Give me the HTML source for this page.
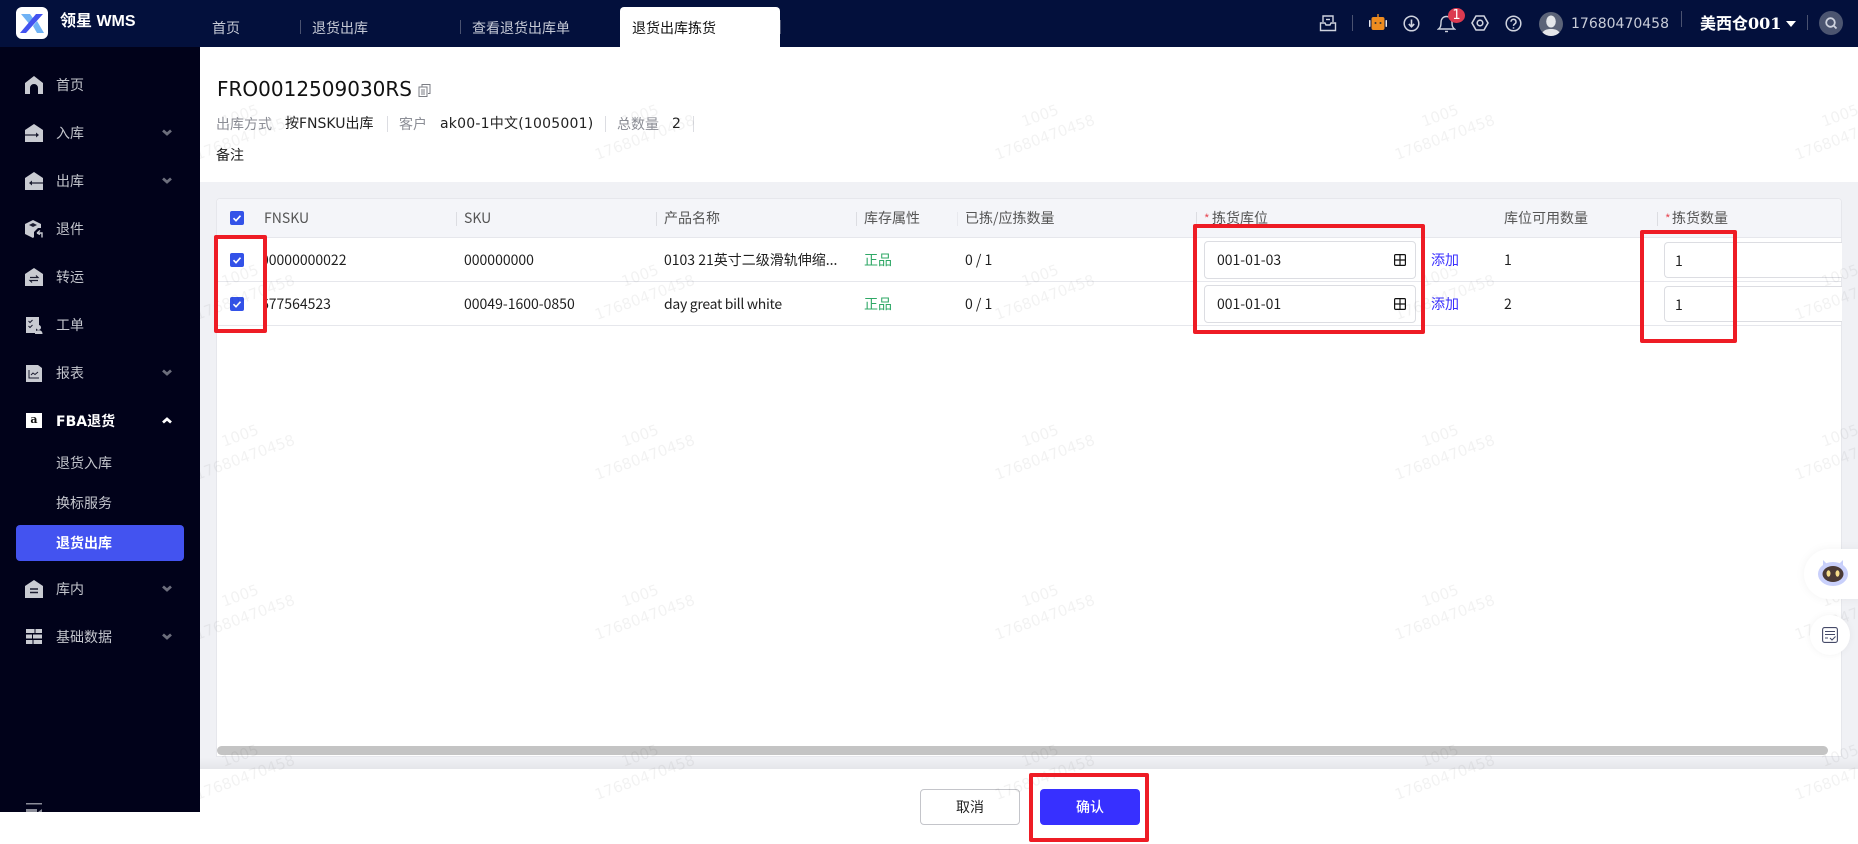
<!DOCTYPE html>
<html lang="zh"><head><meta charset="utf-8"><title>退货出库拣货</title>
<style>
*{box-sizing:border-box;margin:0;padding:0}
html,body{width:1858px;height:844px;overflow:hidden;background:#fff}
body{position:relative;font-family:"Noto Sans CJK SC","Liberation Sans",sans-serif;font-size:14px;color:#222}
.a{position:absolute}
.t{position:absolute;white-space:nowrap;line-height:20px;height:20px}
.dj{font-family:"DejaVu Sans","Noto Sans CJK SC",sans-serif}
.hd{background:#03103c;left:0;top:0;width:1858px;height:47px}
.side{background:#01021a;left:0;top:47px;width:200px;height:765px;overflow:hidden}
.tab{color:#c6cad6}
.v{position:absolute;width:1px}
.m{color:#c3c5cc;left:56px}
.ic{position:absolute;left:25px;width:18px;height:18px}
.ch{position:absolute;left:162px;width:10px;height:7px}
.th{color:#555;font-size:14px}
.td{color:#1f1f1f;font-size:14px}
.line{position:absolute;left:217px;width:1624px;height:1px;background:#e6e7ec}
.inp{position:absolute;background:#fff;border:1px solid #dcdde2;border-radius:4px}
.cb{position:absolute;left:230px;width:14px;height:14px}
.red{position:absolute;border:4px solid #ee1c25;border-radius:2px;z-index:6}
.star{color:#e8505b;font-size:12px}
</style></head><body>

<div class="a hd"></div>
<svg class="a" style="left:16px;top:7px" width="32" height="32" viewBox="0 0 32 32"><rect width="32" height="32" rx="6" fill="#fff"/><path d="M5 7h9l5 7-4 5z" fill="#6fb2f5"/><path d="M20 7h7L10 26H4z" fill="#4353f0"/><path d="M17 19l4-5 7 12h-7z" fill="#6fb2f5"/></svg>
<div class="t" style="left:60px;top:12px;color:#fff;font:bold 16px/20px 'Liberation Sans','Noto Sans CJK SC',sans-serif">领星 WMS</div>

<div class="t tab" style="left:212px;top:18px">首页</div>
<div class="v" style="left:300px;top:20px;height:14px;background:#4a5270"></div>
<div class="t tab" style="left:312px;top:18px">退货出库</div>
<div class="v" style="left:460px;top:20px;height:14px;background:#4a5270"></div>
<div class="t tab" style="left:472px;top:18px">查看退货出库单</div>
<div class="a" style="left:620px;top:7px;width:160px;height:40px;background:#fff;border-radius:4px 4px 0 0"></div>
<div class="t" style="left:632px;top:18px;color:#111">退货出库拣货</div>
<div class="v" style="left:780px;top:20px;height:14px;background:#4a5270"></div>

<svg class="a" style="left:1319px;top:14px" width="18" height="18" viewBox="0 0 18 18" fill="none" stroke="#cfd3de" stroke-width="1.4"><path d="M4 8V2h10v6M1.500 9v7.500h15V9H12l-1 2H7L6 9z"/><path d="M7 5.500h4"/></svg>
<div class="v" style="left:1352px;top:15px;height:16px;background:#4a5270"></div>
<svg class="a" style="left:1368px;top:13px" width="20" height="20" viewBox="0 0 20 20"><rect x="9.300" y="1" width="1.400" height="4" fill="#ee8c20"/><rect x="3.500" y="4" width="13" height="13" rx="2" fill="#ee8c20"/><rect x="1" y="7" width="1.500" height="7" rx=".7" fill="#e8e8ee"/><rect x="17.500" y="7" width="1.500" height="7" rx=".7" fill="#e8e8ee"/><circle cx="7.500" cy="10" r="1" fill="#333"/><circle cx="12.500" cy="10" r="1" fill="#333"/></svg>
<svg class="a" style="left:1403px;top:15px" width="17" height="17" viewBox="0 0 17 17" fill="none" stroke="#cfd3de"><circle cx="8.500" cy="8.500" r="7.300" stroke-width="1.500"/><path d="M8.500 4.500v7M5.800 9l2.700 2.700L11.200 9" stroke-width="1.600"/></svg>
<svg class="a" style="left:1437px;top:13px" width="19" height="20" viewBox="0 0 19 20" fill="none" stroke="#cfd3de" stroke-width="1.400"><path d="M1.500 16c2-1.500 2.500-3 2.500-6.500C4 6 6 3.500 9.500 3.500S15 6 15 9.500c0 3.500.5 5 2.500 6.500z"/><path d="M8 18.500h3"/></svg>
<div class="a" style="left:1448px;top:8px;width:17px;height:15px;border-radius:50%;background:#dc3a50;color:#fff;font:13px/15px 'DejaVu Sans',sans-serif;text-align:center">1</div>
<svg class="a" style="left:1471px;top:14px" width="18" height="18" viewBox="0 0 18 18" fill="none" stroke="#cfd3de" stroke-width="1.600"><path d="M5 2h8l4 7-4 7H5L1 9z"/><circle cx="9" cy="9" r="2.800"/></svg>
<svg class="a" style="left:1505px;top:15px" width="17" height="17" viewBox="0 0 17 17" fill="none" stroke="#cfd3de" stroke-width="1.500"><circle cx="8.500" cy="8.500" r="7.300"/><path d="M6 6.800a2.500 2.500 0 1 1 3.800 2.100c-.9.600-1.300 1-1.300 2"/><path d="M8.500 12.300v1.300"/></svg>
<svg class="a" style="left:1539px;top:12px" width="24" height="24" viewBox="0 0 24 24"><circle cx="12" cy="12" r="12" fill="#5b6378"/><ellipse cx="12" cy="9.500" rx="4.800" ry="6" fill="#e4e6ea"/><path d="M3.500 20.500c2-3 5-3.500 8.500-3.500s6.500.5 8.500 3.500A12 12 0 0 1 12 24a12 12 0 0 1-8.500-3.500z" fill="#e4e6ea"/></svg>
<div class="t dj" style="left:1571px;top:14px;color:#c8ccd8">17680470458</div>
<div class="v" style="left:1681px;top:11px;height:16px;background:#4a5270"></div>
<div class="t" style="left:1700px;top:14px;color:#fff;font:bold 16px/20px 'DejaVu Serif','Noto Sans CJK SC',serif">美西仓001</div>
<svg class="a" style="left:1786px;top:21px" width="10" height="6" viewBox="0 0 10 6"><path d="M0 0h10L5 6z" fill="#fff"/></svg>
<div class="v" style="left:1807px;top:15px;height:15px;background:#4a5270"></div>
<svg class="a" style="left:1819px;top:11px" width="24" height="24" viewBox="0 0 24 24" fill="none"><circle cx="12" cy="12" r="12" fill="#4c5570"/><circle cx="11.500" cy="11.500" r="4.300" stroke="#cfd3de" stroke-width="1.800"/><path d="M14.500 14.500l3 3" stroke="#cfd3de" stroke-width="1.800"/></svg>

<div class="a side"></div>
<svg class="ic" style="top:76px" viewBox="0 0 18 18"><path d="M0 18V7L9 0l9 7v11h-5v-6a4 4 0 0 0-8 0v6z" fill="#c9cbd2"/></svg>
<div class="t m" style="top:75px">首页</div>
<svg class="ic" style="top:124px" viewBox="0 0 18 18"><path d="M0 18V6l9-6 9 6v12z" fill="#c9cbd2"/><path d="M0 11h12" stroke="#3a3b4d" stroke-width="1.500"/><path d="M11 8.500l3 2.500-3 2.500z" fill="#1b1c30"/></svg>
<div class="t m" style="top:123px">入库</div>
<svg class="ch" style="top:129px" viewBox="0 0 10 7"><path d="M1 1.500L5 5l4-3.500" fill="none" stroke="#6c6e7c" stroke-width="2.800"/></svg>
<svg class="ic" style="top:172px" viewBox="0 0 18 18"><path d="M0 18V6l9-6 9 6v12z" fill="#c9cbd2"/><path d="M6 11h12" stroke="#3a3b4d" stroke-width="1.500"/><path d="M7 8.500L4 11l3 2.500z" fill="#1b1c30"/></svg>
<div class="t m" style="top:171px">出库</div>
<svg class="ch" style="top:177px" viewBox="0 0 10 7"><path d="M1 1.500L5 5l4-3.500" fill="none" stroke="#6c6e7c" stroke-width="2.800"/></svg>
<svg class="ic" style="top:220px" viewBox="0 0 18 18"><path d="M8 0l8 4v4l-3 0-4 4v5l-1 1-8-4V4z" fill="#c9cbd2"/><path d="M8 3l4 2-4 2-4-2z" fill="#1b1c30"/><path d="M12 13l3-2.500M12 13l3 1.500M12.500 13H17v4.500" fill="none" stroke="#c9cbd2" stroke-width="1.400"/></svg>
<div class="t m" style="top:219px">退件</div>
<svg class="ic" style="top:268px" viewBox="0 0 18 18"><path d="M0 18V6l9-6 9 6v12z" fill="#c9cbd2"/><path d="M5 9.500h8l-2-2M13 12.500H5l2 2" fill="none" stroke="#1b1c30" stroke-width="1.200"/></svg>
<div class="t m" style="top:267px">转运</div>
<svg class="ic" style="top:316px" viewBox="0 0 18 18"><path d="M1 1h13v9a4 4 0 0 0-3 4l0 3H1z" fill="#c9cbd2"/><path d="M3.500 5l1.500 1.500L7.500 4M3.500 10l1.500 1.500L7.500 9" fill="none" stroke="#1b1c30" stroke-width="1"/><circle cx="13.500" cy="11.500" r="2.500" fill="#c9cbd2"/><path d="M10 18c0-3 1.500-3.800 3.500-3.800S17.500 15 17.500 18z" fill="#c9cbd2"/></svg>
<div class="t m" style="top:315px">工单</div>
<svg class="ic" style="top:364px" viewBox="0 0 18 18"><path d="M1 1h12l4 3v14H1z" fill="#c9cbd2"/><path d="M4 6v8h10M6 11l2-2 2 1.500 3-2.500" fill="none" stroke="#1b1c30" stroke-width="1"/></svg>
<div class="t m" style="top:363px">报表</div>
<svg class="ch" style="top:369px" viewBox="0 0 10 7"><path d="M1 1.500L5 5l4-3.500" fill="none" stroke="#6c6e7c" stroke-width="2.800"/></svg>

<div class="a" style="left:26px;top:413px;width:16px;height:15px;background:#fff;color:#111;font:bold 11px/14px 'DejaVu Serif',serif;text-align:center">a</div>
<div class="t" style="left:56px;top:411px;color:#fff;font-weight:700"><span class="dj" style="font-weight:700">FBA</span>退货</div>
<svg class="ch" style="top:417px" viewBox="0 0 10 7"><path d="M1 5.500L5 2l4 3.500" fill="none" stroke="#fff" stroke-width="2.800"/></svg>
<div class="t m" style="top:453px">退货入库</div>
<div class="t m" style="top:493px">换标服务</div>
<div class="a" style="left:16px;top:525px;width:168px;height:36px;background:#4353f0;border-radius:4px"></div>
<div class="t" style="left:56px;top:533px;color:#fff;font-weight:700">退货出库</div>
<svg class="ic" style="top:580px" viewBox="0 0 18 18"><path d="M0 18V6l9-6 9 6v12z" fill="#c9cbd2"/><path d="M5 9h8M5 12.500h8" stroke="#1b1c30" stroke-width="1.500"/></svg>
<div class="t m" style="top:579px">库内</div>
<svg class="ch" style="top:585px" viewBox="0 0 10 7"><path d="M1 1.500L5 5l4-3.500" fill="none" stroke="#6c6e7c" stroke-width="2.800"/></svg>
<svg class="ic" style="top:629px;left:26px;width:16px;height:15px" viewBox="0 0 16 15"><path d="M0 0h16v4H0zM0 5.500h6v4H0zM7 5.500h9v4H7zM0 11h16v4H0z" fill="#c9cbd2"/><path d="M7 11v4M9 0v4" stroke="#01021a"/></svg>
<div class="t m" style="top:627px">基础数据</div>
<svg class="ch" style="top:633px" viewBox="0 0 10 7"><path d="M1 1.500L5 5l4-3.500" fill="none" stroke="#6c6e7c" stroke-width="2.800"/></svg>
<svg class="a" style="left:26px;top:803px" width="16" height="9" viewBox="0 0 16 9"><path d="M0 0h16v1.500H0zM0 6h11v3H0zM12 9l4-3v3z" fill="#8a8c98"/></svg>

<!-- page head -->
<div class="t dj" style="left:217px;top:76px;height:26px;font-size:20px;line-height:26px;color:#111">FRO0012509030RS</div>
<svg class="a" style="left:418px;top:84px" width="13" height="13" viewBox="0 0 13 13" fill="none" stroke="#7b7d84"><path d="M4 2.500V.5h8v9h-2"/><rect x="1" y="3" width="8" height="9.500"/><path d="M3 6h4M3 8h4M3 10h4"/></svg>
<div class="t" style="left:216px;top:114px;color:#8c8e96">出库方式</div>
<div class="t dj" style="left:285px;top:114px;color:#222;font-size:14px">按FNSKU出库</div>
<div class="v" style="left:387px;top:116px;height:16px;background:#dcdde2"></div>
<div class="t" style="left:399px;top:114px;color:#8c8e96">客户</div>
<div class="t dj" style="left:440px;top:114px;color:#222;font-size:14px;letter-spacing:.22px">ak00-1中文(1005001)</div>
<div class="v" style="left:605px;top:116px;height:16px;background:#dcdde2"></div>
<div class="t" style="left:617px;top:114px;color:#8c8e96">总数量</div>
<div class="t dj" style="left:672px;top:114px;color:#222">2</div>
<div class="v" style="left:693px;top:116px;height:16px;background:#dcdde2"></div>
<div class="t" style="left:216px;top:145px;color:#222">备注</div>

<!-- gray panel -->
<div class="a" style="left:200px;top:182px;width:1658px;height:587px;background:linear-gradient(#f0f1f5 0,#f0f1f5 98%,#e5e6ea 100%)"></div>
<div class="a" style="left:216px;top:198px;width:1626px;height:559px;background:#fff;border:1px solid #e6e7ec;border-radius:4px 4px 0 0"></div>
<div class="a" style="left:217px;top:199px;width:1624px;height:38px;background:#f4f5f9;border-radius:4px 4px 0 0"></div>
<div class="line" style="top:237px"></div>
<div class="line" style="top:281px"></div>
<div class="line" style="top:325px"></div>

<svg class="cb" style="top:211px" viewBox="0 0 14 14"><rect width="14" height="14" rx="2" fill="#3352e8"/><path d="M3.500 7.200l2.500 2.500 4.500-5" fill="none" stroke="#fff" stroke-width="1.600"/></svg>
<svg class="cb" style="top:253px" viewBox="0 0 14 14"><rect width="14" height="14" rx="2" fill="#3352e8"/><path d="M3.500 7.200l2.500 2.500 4.500-5" fill="none" stroke="#fff" stroke-width="1.600"/></svg>
<svg class="cb" style="top:297px" viewBox="0 0 14 14"><rect width="14" height="14" rx="2" fill="#3352e8"/><path d="M3.500 7.200l2.500 2.500 4.500-5" fill="none" stroke="#fff" stroke-width="1.600"/></svg>

<div class="t th" style="left:264px;top:208px">FNSKU</div>
<div class="v" style="left:456px;top:212px;height:14px;background:#dcdde2"></div>
<div class="t th" style="left:464px;top:208px">SKU</div>
<div class="v" style="left:656px;top:212px;height:14px;background:#dcdde2"></div>
<div class="t th" style="left:664px;top:208px">产品名称</div>
<div class="v" style="left:856px;top:212px;height:14px;background:#dcdde2"></div>
<div class="t th" style="left:864px;top:208px">库存属性</div>
<div class="v" style="left:957px;top:212px;height:14px;background:#e8e9ee"></div>
<div class="t th" style="left:965px;top:208px">已拣/应拣数量</div>
<div class="v" style="left:1196px;top:212px;height:14px;background:#dcdde2"></div>
<div class="t star" style="left:1204px;top:209px">*</div>
<div class="t th" style="left:1212px;top:208px">拣货库位</div>
<div class="t th" style="left:1504px;top:208px">库位可用数量</div>
<div class="v" style="left:1657px;top:212px;height:14px;background:#dcdde2"></div>
<div class="t star" style="left:1665px;top:209px">*</div>
<div class="t th" style="left:1672px;top:208px">拣货数量</div>

<div class="a" style="left:265px;top:250px;width:100px;height:20px;overflow:hidden"><div class="t td" style="left:-4px;top:0">00000000022</div></div>
<div class="t td" style="left:464px;top:250px">000000000</div>
<div class="t td" style="left:664px;top:250px">0103 21英寸二级滑轨伸缩...</div>
<div class="t td" style="left:864px;top:250px;color:#2fa866">正品</div>
<div class="t td" style="left:965px;top:250px">0 / 1</div>

<div class="a" style="left:265px;top:294px;width:100px;height:20px;overflow:hidden"><div class="t td" style="left:-4px;top:0">677564523</div></div>
<div class="t td" style="left:464px;top:294px">00049-1600-0850</div>
<div class="t td" style="left:664px;top:294px;letter-spacing:-.3px">day great bill white</div>
<div class="t td" style="left:864px;top:294px;color:#2fa866">正品</div>
<div class="t td" style="left:965px;top:294px">0 / 1</div>

<div class="inp" style="left:1204px;top:241px;width:212px;height:38px"></div>
<div class="t td" style="left:1217px;top:250px">001-01-03</div>
<svg class="a" style="left:1394px;top:254px" width="12" height="12" viewBox="0 0 12 12" fill="none" stroke="#111" stroke-width="1.200"><rect x=".6" y=".6" width="10.800" height="10.800" rx="1"/><path d="M6 1v10M1 6h10"/></svg>
<div class="t" style="left:1431px;top:250px;color:#3a2fff">添加</div>
<div class="t td" style="left:1504px;top:250px">1</div>
<div class="inp" style="left:1664px;top:242px;width:178px;height:36px;border-right:0;border-radius:4px 0 0 4px"></div>
<div class="t td" style="left:1675px;top:251px">1</div>

<div class="inp" style="left:1204px;top:285px;width:212px;height:38px"></div>
<div class="t td" style="left:1217px;top:294px">001-01-01</div>
<svg class="a" style="left:1394px;top:298px" width="12" height="12" viewBox="0 0 12 12" fill="none" stroke="#111" stroke-width="1.200"><rect x=".6" y=".6" width="10.800" height="10.800" rx="1"/><path d="M6 1v10M1 6h10"/></svg>
<div class="t" style="left:1431px;top:294px;color:#3a2fff">添加</div>
<div class="t td" style="left:1504px;top:294px">2</div>
<div class="inp" style="left:1664px;top:286px;width:178px;height:36px;border-right:0;border-radius:4px 0 0 4px"></div>
<div class="t td" style="left:1675px;top:295px">1</div>

<div class="a" style="left:217px;top:746px;width:1611px;height:9px;background:#c4c4c4;border-radius:5px"></div>

<!-- footer buttons -->
<div class="a" style="left:920px;top:789px;width:100px;height:36px;border:1px solid #c4c5ca;border-radius:4px;text-align:center;line-height:34px;color:#222">取消</div>
<div class="a" style="left:1040px;top:789px;width:100px;height:36px;background:#3730ff;border-radius:4px;text-align:center;line-height:36px;color:#fff;font-weight:500">确认</div>

<!-- watermark -->
<svg class="a" style="left:200px;top:47px;z-index:4;pointer-events:none" width="1658" height="797" viewBox="200 47 1658 797" font-family="'DejaVu Sans',sans-serif" font-size="15" fill="#000" fill-opacity=".05" text-anchor="middle">
<g transform="translate(241,127) rotate(-20)"><text x="3" y="-6">1005</text><text y="16">17680470458</text></g>
<g transform="translate(641,127) rotate(-20)"><text x="3" y="-6">1005</text><text y="16">17680470458</text></g>
<g transform="translate(1041,127) rotate(-20)"><text x="3" y="-6">1005</text><text y="16">17680470458</text></g>
<g transform="translate(1441,127) rotate(-20)"><text x="3" y="-6">1005</text><text y="16">17680470458</text></g>
<g transform="translate(1841,127) rotate(-20)"><text x="3" y="-6">1005</text><text y="16">17680470458</text></g>
<g transform="translate(241,287) rotate(-20)"><text x="3" y="-6">1005</text><text y="16">17680470458</text></g>
<g transform="translate(641,287) rotate(-20)"><text x="3" y="-6">1005</text><text y="16">17680470458</text></g>
<g transform="translate(1041,287) rotate(-20)"><text x="3" y="-6">1005</text><text y="16">17680470458</text></g>
<g transform="translate(1441,287) rotate(-20)"><text x="3" y="-6">1005</text><text y="16">17680470458</text></g>
<g transform="translate(1841,287) rotate(-20)"><text x="3" y="-6">1005</text><text y="16">17680470458</text></g>
<g transform="translate(241,447) rotate(-20)"><text x="3" y="-6">1005</text><text y="16">17680470458</text></g>
<g transform="translate(641,447) rotate(-20)"><text x="3" y="-6">1005</text><text y="16">17680470458</text></g>
<g transform="translate(1041,447) rotate(-20)"><text x="3" y="-6">1005</text><text y="16">17680470458</text></g>
<g transform="translate(1441,447) rotate(-20)"><text x="3" y="-6">1005</text><text y="16">17680470458</text></g>
<g transform="translate(1841,447) rotate(-20)"><text x="3" y="-6">1005</text><text y="16">17680470458</text></g>
<g transform="translate(241,607) rotate(-20)"><text x="3" y="-6">1005</text><text y="16">17680470458</text></g>
<g transform="translate(641,607) rotate(-20)"><text x="3" y="-6">1005</text><text y="16">17680470458</text></g>
<g transform="translate(1041,607) rotate(-20)"><text x="3" y="-6">1005</text><text y="16">17680470458</text></g>
<g transform="translate(1441,607) rotate(-20)"><text x="3" y="-6">1005</text><text y="16">17680470458</text></g>
<g transform="translate(1841,607) rotate(-20)"><text x="3" y="-6">1005</text><text y="16">17680470458</text></g>
<g transform="translate(241,767) rotate(-20)"><text x="3" y="-6">1005</text><text y="16">17680470458</text></g>
<g transform="translate(641,767) rotate(-20)"><text x="3" y="-6">1005</text><text y="16">17680470458</text></g>
<g transform="translate(1041,767) rotate(-20)"><text x="3" y="-6">1005</text><text y="16">17680470458</text></g>
<g transform="translate(1441,767) rotate(-20)"><text x="3" y="-6">1005</text><text y="16">17680470458</text></g>
<g transform="translate(1841,767) rotate(-20)"><text x="3" y="-6">1005</text><text y="16">17680470458</text></g>
</svg>

<!-- floating widgets -->
<div class="a" style="left:1804px;top:549px;width:60px;height:50px;background:#fff;border-radius:25px 0 0 25px;box-shadow:0 0 10px rgba(0,0,0,.05);z-index:5"></div>
<svg class="a" style="left:1817px;top:558px;z-index:5" width="32" height="30" viewBox="0 0 32 30"><path d="M6 2l4 4h12l4-4v8H6z" fill="#c6cefa"/><ellipse cx="16" cy="16" rx="15" ry="12" fill="#c9d0fb"/><ellipse cx="16" cy="16" rx="10.500" ry="8" fill="#4a3a36"/><ellipse cx="11.500" cy="15.500" rx="2" ry="3.200" fill="#f5dc8a"/><ellipse cx="20.500" cy="15.500" rx="2" ry="3.200" fill="#f5dc8a"/></svg>
<div class="a" style="left:1810px;top:615px;width:40px;height:40px;background:#fff;border-radius:50%;box-shadow:0 0 8px rgba(0,0,0,.05);z-index:5"></div>
<svg class="a" style="left:1822px;top:627px;z-index:5" width="16" height="16" viewBox="0 0 16 16" fill="none" stroke="#454a68" stroke-width="1.100"><rect x=".6" y=".6" width="14.800" height="14.800" rx="2"/><path d="M3 4.500h10M3 7.500h10M3 11h3M8 11l2 2 3.500-3.500"/></svg>

<!-- annotation boxes -->
<div class="red" style="left:214px;top:235px;width:53px;height:98px"></div>
<div class="red" style="left:1193px;top:224px;width:232px;height:110px"></div>
<div class="red" style="left:1640px;top:230px;width:97px;height:113px"></div>
<div class="red" style="left:1029px;top:773px;width:120px;height:69px"></div>

</body></html>
